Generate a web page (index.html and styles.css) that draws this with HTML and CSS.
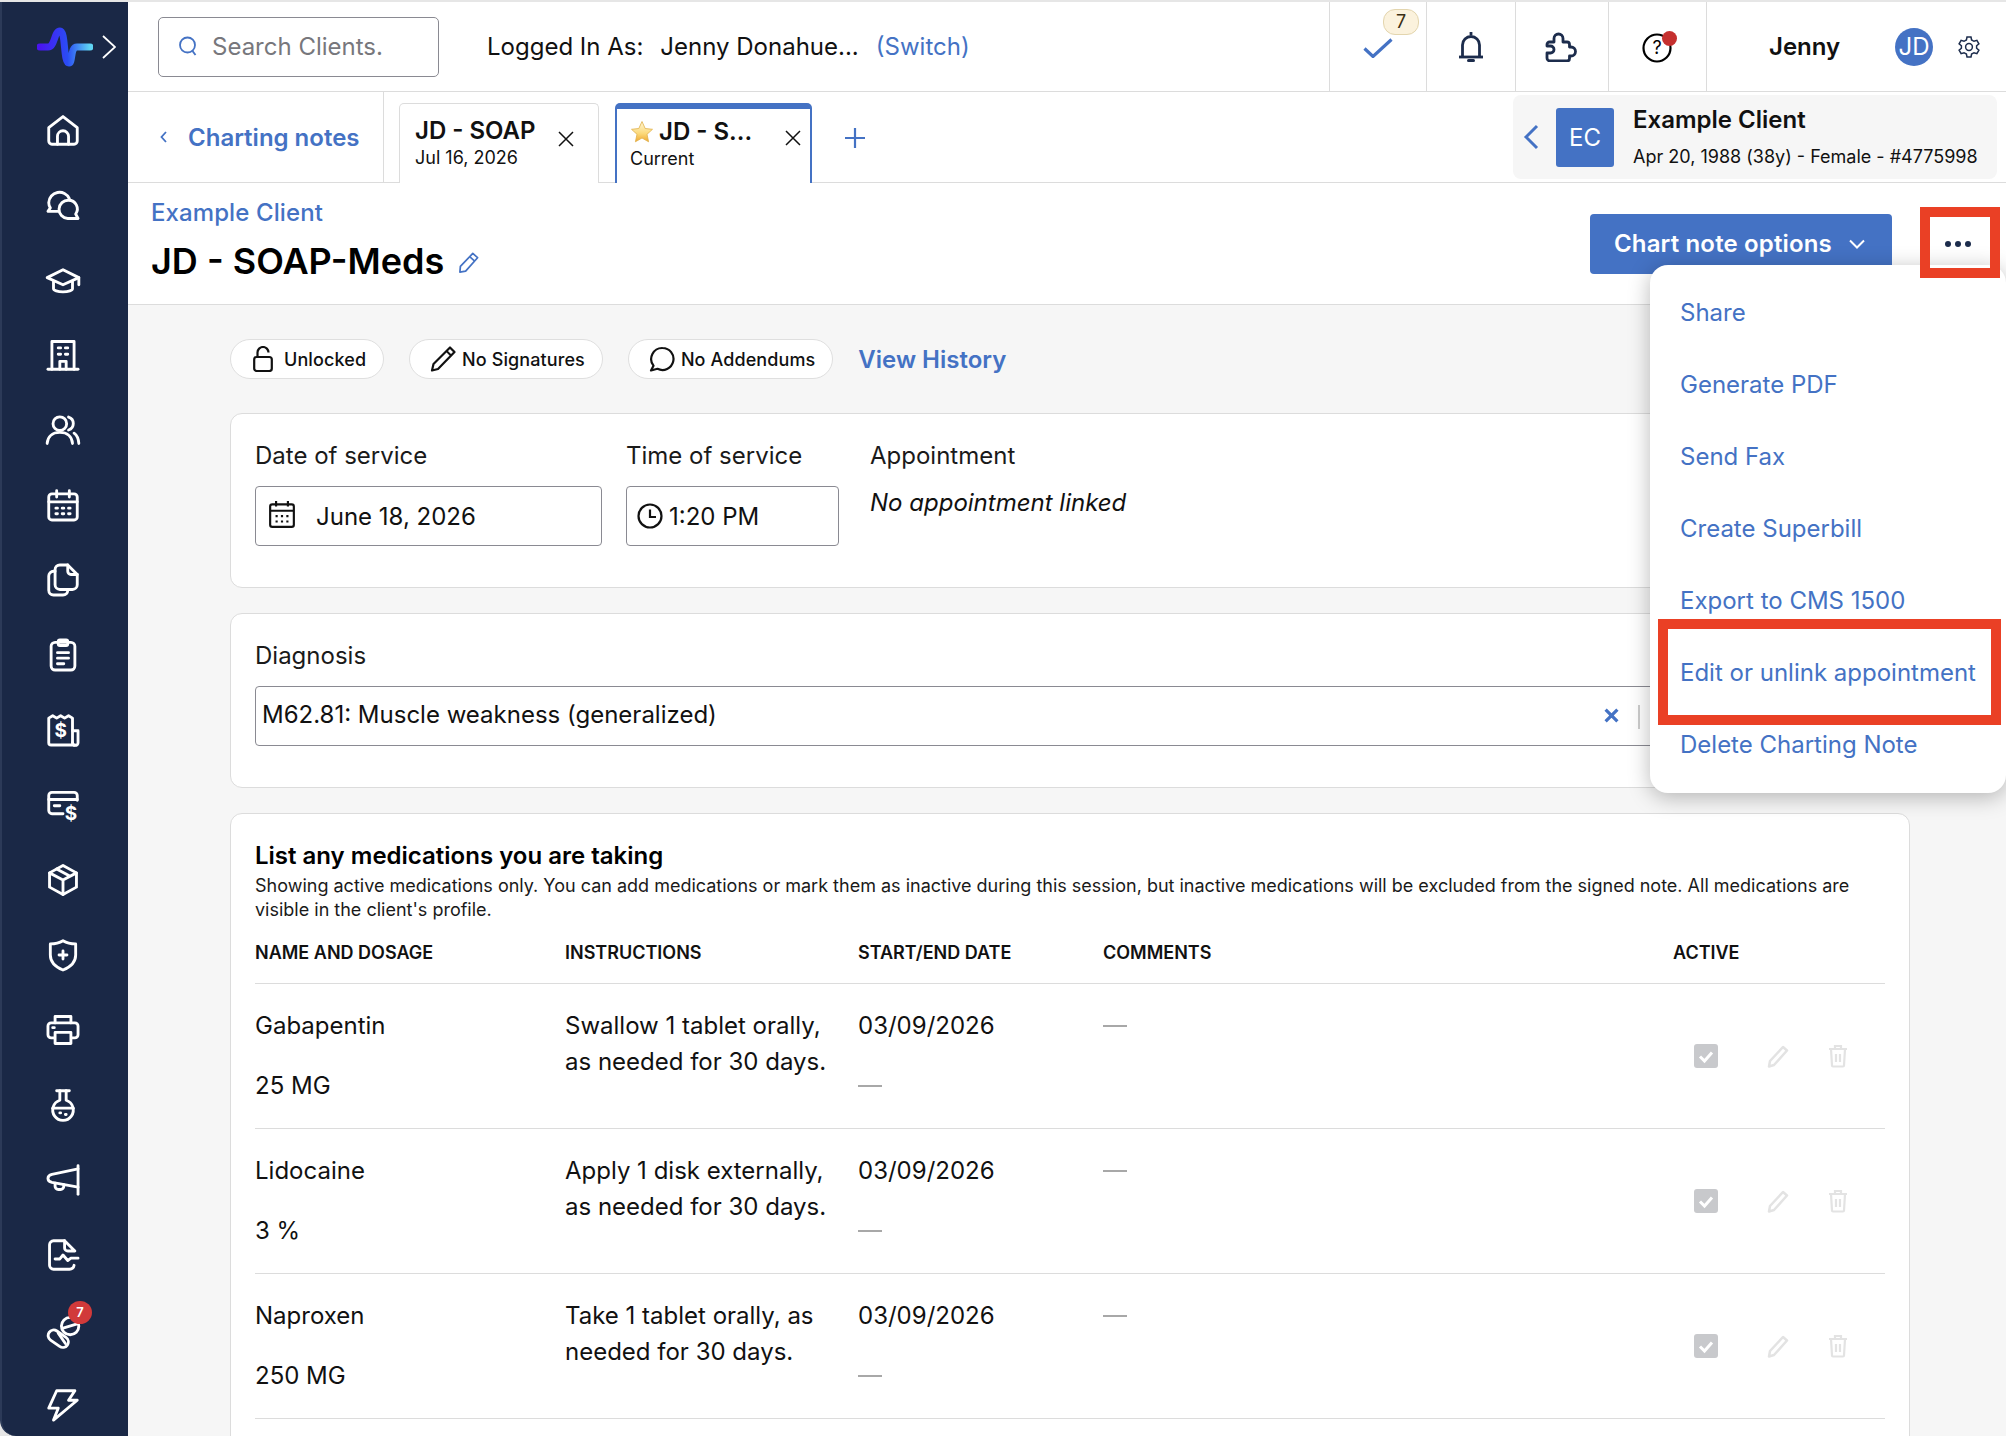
FILE: index.html
```html
<!DOCTYPE html>
<html lang="en">
<head>
    <meta charset="UTF-8">
    <meta name="viewport" content="width=device-width, initial-scale=1.0">
    <title>Charting note</title>
    <link rel="stylesheet" href="styles.css">
</head>
<body>
<div class="app">
    <nav class="sidebar">
        <div class="brand">
            <svg class="logo" viewBox="0 0 56 40" fill="none">
                <defs>
                    <linearGradient id="wave" x1="0" y1="0" x2="1" y2="0">
                        <stop offset="0" stop-color="#4a14f0"/>
                        <stop offset="0.55" stop-color="#2a4df5"/>
                        <stop offset="1" stop-color="#5fd4f2"/>
                    </linearGradient>
                </defs>
                <path d="M3 20h8c7 0 6-16 12-16s3 32 9 32c4 0 1-16 8-16h13" stroke="url(#wave)" stroke-width="7" stroke-linecap="round" stroke-linejoin="round"/>
            </svg>
            <svg class="brand-arrow" viewBox="0 0 14 24" fill="none"><path d="M1 1l12 11L1 23" stroke="#fff" stroke-width="1.800"/></svg>
        </div>
        <a class="nav-item"><svg viewBox="0 0 24 24"><path d="M3 10.500 12 3.500l9 7V19a2 2 0 0 1-2 2H5a2 2 0 0 1-2-2z"/><path d="M8.500 21v-5a3.500 3.500 0 0 1 7 0v5"/></svg></a>
        <a class="nav-item"><svg viewBox="0 0 24 24"><path d="M16 8A6.800 6.800 0 0 0 3 10.500c0 1.300.4 2.400 1 3.300L2.500 16H9"/><path d="M15.500 9a5.500 5.500 0 0 1 4.500 8.700l1.500 2.800h-6.500a5.700 5.700 0 0 1 .5-11.500z"/></svg></a>
        <a class="nav-item"><svg viewBox="0 0 24 24"><path d="M12 5.500 2 10.500l10 4.500 10-4.500z"/><path d="M6 13v4.500c0 1 2.500 2 6 2s6-1 6-2V13"/><path d="M22 10.500V15"/></svg></a>
        <a class="nav-item"><svg viewBox="0 0 24 24"><path d="M5 21V3.500h14V21"/><path d="M2.500 21h19"/><path d="M10 21v-5h4v5"/><path d="M9 7.500h1.500M13.500 7.500H15M9 11.500h1.500M13.500 11.500H15"/></svg></a>
        <a class="nav-item"><svg viewBox="0 0 24 24"><circle cx="10" cy="8" r="4.300"/><path d="M2 20.500c.3-4.500 3.500-7 8-7s7.700 2.500 8 7"/><path d="M15.500 3.800a4.300 4.300 0 0 1 0 8.200"/><path d="M19 14c1.800 1.300 2.800 3.500 3 6.500"/></svg></a>
        <a class="nav-item"><svg viewBox="0 0 24 24"><rect x="3" y="5" width="18" height="16.500" rx="2"/><path d="M3 10h18M8 3v4M16 3v4"/><path d="M7.500 14h1M11.500 14h1M15.500 14h1M7.500 17.500h1M11.500 17.500h1M15.500 17.500h1"/></svg></a>
        <a class="nav-item"><svg viewBox="0 0 24 24"><path d="M10 2.500h5l6 6V15a3 3 0 0 1-3 3h-8a3 3 0 0 1-3-3V5.500a3 3 0 0 1 3-3z"/><path d="M15 2.500v4a2 2 0 0 0 2 2h4"/><path d="M7 6.500H6a3 3 0 0 0-3 3v9a3 3 0 0 0 3 3h6a3 3 0 0 0 3-3"/></svg></a>
        <a class="nav-item"><svg viewBox="0 0 24 24"><rect x="4.500" y="4" width="15" height="17.500" rx="2.500"/><rect x="9" y="2.500" width="6" height="3.500" rx="1"/><path d="M8.500 10.500h7M8.500 14h7M8.500 17.500h4"/></svg></a>
        <a class="nav-item"><svg viewBox="0 0 24 24"><path d="M18 20V4.500L15.500 3 13 4.500 10.500 3 8 4.500 5.500 3 3 4.500V20a1.500 1.500 0 0 0 1.500 1.500h15"/><path d="M18 12.500h3.500V20a1.700 1.700 0 0 1-3.500 0"/><text x="10.500" y="16.500" class="nav-glyph">$</text></svg></a>
        <a class="nav-item"><svg viewBox="0 0 24 24"><path d="M12 17.500H5a2 2 0 0 1-2-2V6a2 2 0 0 1 2-2h14a2 2 0 0 1 2 2v3"/><path d="M3 8.500h18M6.500 12.500h3.500"/><text x="17" y="21.500" class="nav-glyph">$</text></svg></a>
        <a class="nav-item"><svg viewBox="0 0 24 24"><path d="M12 2.800 3.500 7.500v9L12 21.200l8.500-4.700v-9z"/><path d="M3.500 7.500 12 12l8.500-4.500M12 12v9.200M8 5l8.500 4.700"/></svg></a>
        <a class="nav-item"><svg viewBox="0 0 24 24"><path d="M12 3c2.500 1.500 5 2 8 2v7c0 4.500-3 7.500-8 9.500-5-2-8-5-8-9.500V5c3 0 5.500-.5 8-2z"/><path d="M12 9.500v5M9.500 12h5"/></svg></a>
        <a class="nav-item"><svg viewBox="0 0 24 24"><path d="M7 7.500V3.500h10v4"/><path d="M6.500 17H4.500a2 2 0 0 1-2-2v-5.500a2 2 0 0 1 2-2h15a2 2 0 0 1 2 2V15a2 2 0 0 1-2 2h-2"/><path d="M7 13.500h10v7H7z"/><path d="M5.500 10.500h1"/></svg></a>
        <a class="nav-item"><svg viewBox="0 0 24 24"><path d="M8 3h8"/><path d="M10 3v6a6.500 6.500 0 1 0 4 0V3"/><path d="M5.500 14h13"/><path d="M10 17h.5M13.500 18h.5"/></svg></a>
        <a class="nav-item"><svg viewBox="0 0 24 24"><path d="M21.500 3v18"/><path d="M21.500 5 5 8.500C3 9 2.500 10 2.500 11s.5 2 2.500 2.500l16.500 3"/><path d="M7 14v2a2 2 0 0 0 2 2h1.500a2 2 0 0 0 2-2v-1"/></svg></a>
        <a class="nav-item"><svg viewBox="0 0 24 24"><path d="M13 3H6a2.500 2.500 0 0 0-2.500 2.500v13A2.500 2.500 0 0 0 6 21h10a3 3 0 0 0 3-2.500"/><path d="M13 3l6.500 6.500H15a2 2 0 0 1-2-2z"/><path d="M7 14.500h3l2-2.500 3 3.500 2-1.500h4.500"/></svg></a>
        <a class="nav-item">
            <svg viewBox="0 0 24 24"><rect x="2" y="14" width="14" height="7" rx="3.500" transform="rotate(35 9 17.500)"/><path d="M9 14l4.500 6.500"/><circle cx="16.500" cy="9.500" r="5.500"/><path d="M11.500 11l10-3"/></svg>
            <span class="nav-badge">7</span>
        </a>
        <a class="nav-item"><svg viewBox="0 0 24 24"><path d="M8 3h11.500l-4 6H21L6 21.500 9 14H3z"/></svg></a>
    </nav>

    <div class="main">
        <header class="topbar">
            <div class="search">
                <svg class="search-icon" viewBox="0 0 24 24" fill="none"><circle cx="11.500" cy="11" r="7.500" stroke="#4472c4" stroke-width="1.800"/><path d="M16.500 17l3 4" stroke="#4472c4" stroke-width="1.800"/></svg>
                <span>Search Clients.</span>
            </div>
            <div class="logged">
                <span>Logged In As:</span>
                <span class="logged-name">Jenny Donahue...</span>
                <a class="switch">(Switch)</a>
            </div>
            <div class="top-cell cell-tasks">
                <svg class="ico-check" viewBox="0 0 30 20" fill="none"><path d="M1.500 10.500 10 18.500 28.500 1.500" stroke="#4472c4" stroke-width="3.200"/></svg>
                <span class="task-badge">7</span>
            </div>
            <div class="top-cell cell-bell">
                <svg class="ico-bell" viewBox="0 0 26 32" fill="none"><path d="M13 1v3" stroke="#1c2c4c" stroke-width="2.800"/><path d="M4.500 25V14a8.500 8.500 0 0 1 17 0v11" stroke="#1c2c4c" stroke-width="2.800"/><path d="M1 26h24" stroke="#1c2c4c" stroke-width="2.800"/><path d="M10.500 29.500h5" stroke="#1c2c4c" stroke-width="3" stroke-linecap="round"/></svg>
            </div>
            <div class="top-cell cell-puzzle">
                <svg class="ico-puzzle" viewBox="0 0 32 30" fill="none"><path d="M5 29a3 3 0 0 1-3-3v-5h3.500a3.500 3.500 0 0 0 0-7H2v-1.500A2.500 2.500 0 0 1 4.500 10H9V6.500a4.500 4.500 0 0 1 9 0V10h4a2.500 2.500 0 0 1 2.500 2.500V15H26a4.500 4.500 0 0 1 0 9h-1.500v2.500A2.500 2.500 0 0 1 22 29z" stroke="#1c2c4c" stroke-width="2.800" stroke-linejoin="round"/></svg>
            </div>
            <div class="top-cell cell-help">
                <svg class="ico-help" viewBox="0 0 30 30" fill="none"><circle cx="15" cy="15" r="13.500" stroke="#000" stroke-width="2.200"/><text x="15" y="21" class="help-glyph">?</text></svg>
                <span class="help-dot"></span>
            </div>
            <div class="user">
                <span class="user-name">Jenny</span>
                <span class="avatar">JD</span>
                <svg class="ico-gear" viewBox="0 0 24 24" fill="none" stroke="#1c2c4c" stroke-width="1.500"><circle cx="12" cy="12" r="3.400"/><path d="M10 2h4l.6 3 2.400 1.300 2.900-1 2 3.500-2.300 2v2.400l2.300 2-2 3.500-2.900-1-2.400 1.300-.6 3h-4l-.6-3L7 17.700l-2.900 1-2-3.500 2.300-2v-2.400l-2.300-2 2-3.500 2.900 1L9.400 5z"/></svg>
            </div>
        </header>

        <div class="tabbar">
            <a class="back-link">
                <svg class="back-arrow" viewBox="0 0 8 12" fill="none"><path d="M6.500 1 2 6l4.500 5" stroke="#4472c4" stroke-width="1.800"/></svg>
                Charting notes
            </a>
            <div class="tab">
                <div class="tab-text">
                    <div class="tab-title">JD - SOAP</div>
                    <div class="tab-sub">Jul 16, 2026</div>
                </div>
                <svg class="tab-close" viewBox="0 0 16 16" fill="none"><path d="M1 1l14 14M15 1 1 15" stroke="#111" stroke-width="1.500"/></svg>
            </div>
            <div class="tab tab-active">
                <div class="tab-text">
                    <div class="tab-title">
                        <svg class="tab-star" viewBox="0 0 24 24"><defs><linearGradient id="gold" x1="0" y1="0" x2="0" y2="1"><stop offset="0" stop-color="#fff8d8"/><stop offset="0.6" stop-color="#fbd878"/><stop offset="1" stop-color="#f0a830"/></linearGradient></defs><path d="M12 1.500l3.200 7 7.300.8-5.500 5 1.600 7.500L12 18l-6.600 3.800L7 14.300l-5.500-5 7.300-.8z" fill="url(#gold)" stroke="#e0b04a" stroke-width=".8"/></svg>
                        JD - S...
                    </div>
                    <div class="tab-sub">Current</div>
                </div>
                <svg class="tab-close" viewBox="0 0 16 16" fill="none"><path d="M1 1l14 14M15 1 1 15" stroke="#111" stroke-width="1.500"/></svg>
            </div>
            <svg class="tab-add" viewBox="0 0 22 22" fill="none"><path d="M11 1v20M1 11h20" stroke="#4472c4" stroke-width="2.200"/></svg>
            <div class="client-card">
                <svg class="client-arrow" viewBox="0 0 16 26" fill="none"><path d="M14 2 3 13l11 11" stroke="#4472c4" stroke-width="3"/></svg>
                <span class="client-ec">EC</span>
                <div class="client-info">
                    <div class="client-name">Example Client</div>
                    <div class="client-sub">Apr 20, 1988 (38y) - Female - #4775998</div>
                </div>
            </div>
        </div>

        <div class="note-head">
            <div>
                <a class="note-client">Example Client</a>
                <h1 class="note-title">
                    JD - SOAP-Meds
                    <svg class="note-edit" viewBox="0 0 22 22" fill="none"><path d="M15.500 1.500l5 4.500L8 20l-6 1 .5-6z" stroke="#4472c4" stroke-width="1.800" stroke-linejoin="round"/><path d="M12.500 5l5 4.500" stroke="#4472c4" stroke-width="1.800"/></svg>
                </h1>
            </div>
            <div class="note-actions">
                <button class="options-btn">Chart note options
                    <svg class="options-caret" viewBox="0 0 16 10" fill="none"><path d="M1 1.500l7 7 7-7" stroke="#fff" stroke-width="2"/></svg>
                </button>
                <button class="dots-btn"><span></span><span></span><span></span></button>
            </div>
        </div>

        <div class="content">
            <div class="pills">
                <span class="pill">
                    <svg class="pill-ico" viewBox="0 0 20 26" fill="none"><rect x="1.200" y="11" width="17.600" height="14" rx="2.500" stroke="#111" stroke-width="2.200"/><path d="M4.500 11V6.500a5.500 5.500 0 0 1 11 0" stroke="#111" stroke-width="2.200"/></svg>
                    Unlocked
                </span>
                <span class="pill">
                    <svg class="pill-ico ico-wide" viewBox="0 0 26 26" fill="none"><path d="M20 1.500l4.500 4.500L8 23l-6 1.500L3.500 18z" stroke="#111" stroke-width="2.200" stroke-linejoin="round"/><path d="M16.500 5l4.500 4.500" stroke="#111" stroke-width="2"/></svg>
                    No Signatures
                </span>
                <span class="pill">
                    <svg class="pill-ico ico-wide" viewBox="0 0 26 26" fill="none"><path d="M13.500 2a11 11 0 1 1-5 20.800L2 24.500l2.500-4.800A11 11 0 0 1 13.500 2z" stroke="#111" stroke-width="2.200" stroke-linejoin="round"/></svg>
                    No Addendums
                </span>
                <a class="history">View History</a>
            </div>

            <section class="card card-service">
                <div class="field field-date">
                    <label class="label">Date of service</label>
                    <div class="input">
                        <svg class="input-ico ico-cal" viewBox="0 0 24 26" fill="none" stroke="#111" stroke-width="2"><rect x="1" y="4" width="22" height="21" rx="2"/><path d="M1 10h22M6.500 1v5M17.500 1v5"/><path d="M6 15h2M11 15h2M16 15h2M6 20h2M11 20h2M16 20h2"/></svg>
                        <span class="date-value">June 18, 2026</span>
                    </div>
                </div>
                <div class="field field-time">
                    <label class="label">Time of service</label>
                    <div class="input">
                        <svg class="input-ico" viewBox="0 0 26 26" fill="none" stroke="#111" stroke-width="2.200"><circle cx="13" cy="13" r="11.500"/><path d="M13 6.500V14h6"/></svg>
                        <span>1:20 PM</span>
                    </div>
                </div>
                <div class="field">
                    <label class="label">Appointment</label>
                    <p class="appt">No appointment linked</p>
                </div>
            </section>

            <section class="card card-diagnosis">
                <label class="label">Diagnosis</label>
                <div class="input input-diagnosis">
                    <span class="diagnosis-value">M62.81: Muscle weakness (generalized)</span>
                    <svg class="clear-ico" viewBox="0 0 14 14" fill="none"><path d="M1.500 1.500l11 11M12.500 1.500l-11 11" stroke="#4472c4" stroke-width="3"/></svg>
                    <span class="input-sep"></span>
                </div>
            </section>

            <section class="card card-meds">
                <h2 class="meds-title">List any medications you are taking</h2>
                <p class="meds-desc">Showing active medications only. You can add medications or mark them as inactive during this session, but inactive medications will be excluded from the signed note. All medications are visible in the client's profile.</p>
                <div class="med-grid med-head">
                    <div>NAME AND DOSAGE</div>
                    <div>INSTRUCTIONS</div>
                    <div>START/END DATE</div>
                    <div>COMMENTS</div>
                    <div>ACTIVE</div>
                </div>

                <div class="med-grid med-row">
                    <div class="med-stack"><span>Gabapentin</span><span>25 MG</span></div>
                    <div class="med-text">Swallow 1 tablet orally, as needed for 30 days.</div>
                    <div class="med-stack"><span>03/09/2026</span><span class="dash"></span></div>
                    <div class="med-stack"><span class="dash"></span></div>
                    <div class="med-actions">
                        <span class="med-check"><svg viewBox="0 0 24 24" fill="none"><path d="M6 12.500l4.500 4.500L18 8.500" stroke="#fff" stroke-width="3"/></svg></span>
                        <svg class="med-edit" viewBox="0 0 22 24" fill="none"><path d="M16 3l4 3.500L7 21l-5 1.500L3 17z" stroke="#e3e3e3" stroke-width="2.500" stroke-linejoin="round"/></svg>
                        <svg class="med-trash" viewBox="0 0 20 24" fill="none" stroke="#e3e3e3" stroke-width="2.200"><path d="M1 5h18M7 5V2h6v3M3 5l1 16.500a1 1 0 0 0 1 1h10a1 1 0 0 0 1-1L17 5M8 10v8M12 10v8"/></svg>
                    </div>
                </div>

                <div class="med-grid med-row">
                    <div class="med-stack"><span>Lidocaine</span><span>3 %</span></div>
                    <div class="med-text">Apply 1 disk externally, as needed for 30 days.</div>
                    <div class="med-stack"><span>03/09/2026</span><span class="dash"></span></div>
                    <div class="med-stack"><span class="dash"></span></div>
                    <div class="med-actions">
                        <span class="med-check"><svg viewBox="0 0 24 24" fill="none"><path d="M6 12.500l4.500 4.500L18 8.500" stroke="#fff" stroke-width="3"/></svg></span>
                        <svg class="med-edit" viewBox="0 0 22 24" fill="none"><path d="M16 3l4 3.500L7 21l-5 1.500L3 17z" stroke="#e3e3e3" stroke-width="2.500" stroke-linejoin="round"/></svg>
                        <svg class="med-trash" viewBox="0 0 20 24" fill="none" stroke="#e3e3e3" stroke-width="2.200"><path d="M1 5h18M7 5V2h6v3M3 5l1 16.500a1 1 0 0 0 1 1h10a1 1 0 0 0 1-1L17 5M8 10v8M12 10v8"/></svg>
                    </div>
                </div>

                <div class="med-grid med-row">
                    <div class="med-stack"><span>Naproxen</span><span>250 MG</span></div>
                    <div class="med-text">Take 1 tablet orally, as needed for 30 days.</div>
                    <div class="med-stack"><span>03/09/2026</span><span class="dash"></span></div>
                    <div class="med-stack"><span class="dash"></span></div>
                    <div class="med-actions">
                        <span class="med-check"><svg viewBox="0 0 24 24" fill="none"><path d="M6 12.500l4.500 4.500L18 8.500" stroke="#fff" stroke-width="3"/></svg></span>
                        <svg class="med-edit" viewBox="0 0 22 24" fill="none"><path d="M16 3l4 3.500L7 21l-5 1.500L3 17z" stroke="#e3e3e3" stroke-width="2.500" stroke-linejoin="round"/></svg>
                        <svg class="med-trash" viewBox="0 0 20 24" fill="none" stroke="#e3e3e3" stroke-width="2.200"><path d="M1 5h18M7 5V2h6v3M3 5l1 16.500a1 1 0 0 0 1 1h10a1 1 0 0 0 1-1L17 5M8 10v8M12 10v8"/></svg>
                    </div>
                </div>
            </section>
        </div>
    </div>

    <ul class="menu">
        <li>Share</li>
        <li>Generate PDF</li>
        <li>Send Fax</li>
        <li>Create Superbill</li>
        <li>Export to CMS 1500</li>
        <li>Edit or unlink appointment</li>
        <li>Delete Charting Note</li>
    </ul>
    <div class="mark mark-dots"></div>
    <div class="mark mark-edit"></div>
</div>
</body>
</html>
```
FILE: styles.css
```css
*{
    margin: 0;
    padding: 0;
    box-sizing: border-box;
}
html, body{
    height: 100%;
    overflow: hidden;
}
body{
    font-family: Inter, "Noto Sans", sans-serif;
    font-size: 24px;
    color: #111;
    background-color: #e6e6e6;
}
.app{
    position: relative;
    display: flex;
    height: 1436px;
    padding-top: 2px;
    overflow: hidden;
}
a{
    color: #4472c4;
}

/* sidebar */
.sidebar{
    width: 128px;
    flex-shrink: 0;
    background-color: #1a2846;
    border-left: 2px solid #2c3a58;
    border-bottom-left-radius: 16px;
    display: flex;
    flex-direction: column;
    align-items: center;
}
.brand{
    width: 100%;
    height: 90px;
    flex-shrink: 0;
    display: flex;
    align-items: center;
    padding-left: 35px;
}
.logo{
    width: 56px;
    height: 40px;
}
.brand-arrow{
    width: 14px;
    height: 24px;
    margin-left: 9px;
}
.nav-item{
    position: relative;
    height: 75px;
    width: 100%;
    padding-right: 4px;
    display: flex;
    align-items: center;
    justify-content: center;
    flex-shrink: 0;
}
.nav-item svg{
    width: 38px;
    height: 38px;
    fill: none;
    stroke: #fff;
    stroke-width: 1.800;
    stroke-linejoin: round;
    stroke-linecap: round;
}
.nav-glyph{
    font-family: Inter, sans-serif;
    font-size: 12px;
    font-weight: 700;
    fill: #fff;
    stroke: none;
    text-anchor: middle;
}
.nav-badge{
    position: absolute;
    left: 66px;
    top: 9px;
    width: 24px;
    height: 23px;
    border-radius: 50%;
    background-color: #d13a3a;
    color: #fff;
    font-size: 13px;
    font-weight: 600;
    line-height: 23px;
    text-align: center;
}

/* top bar */
.main{
    flex: 1;
    min-width: 0;
    display: flex;
    flex-direction: column;
    background-color: #f6f6f6;
}
.topbar{
    height: 90px;
    background-color: #fff;
    border-bottom: 1px solid #dcdcdc;
    display: flex;
    align-items: stretch;
    flex-shrink: 0;
}
.search{
    width: 281px;
    height: 60px;
    margin: 15px 0 0 30px;
    border: 1px solid #8a8a92;
    border-radius: 5px;
    display: flex;
    align-items: center;
    padding: 0 0 2px 17px;
    color: #77777c;
}
.search-icon{
    width: 24px;
    height: 24px;
    margin-right: 12px;
}
.logged{
    margin-left: 48px;
    flex: 1;
    display: flex;
    align-items: center;
}
.logged-name{
    margin-left: 17px;
}
.switch{
    margin-left: 17px;
}
.top-cell{
    position: relative;
    border-left: 1px solid #dcdcdc;
    display: flex;
    align-items: center;
    justify-content: center;
}
.cell-tasks{
    width: 97px;
}
.cell-bell{
    width: 89px;
}
.cell-puzzle{
    width: 93px;
}
.cell-help{
    width: 98px;
}
.ico-check{
    width: 30px;
    height: 20px;
    margin-top: 2px;
}
.task-badge{
    position: absolute;
    left: 53px;
    top: 7px;
    width: 36px;
    height: 26px;
    border: 1px solid #e3d5ae;
    border-radius: 12px;
    background-color: #fbf2dd;
    color: #3a2f15;
    font-size: 18px;
    line-height: 24px;
    text-align: center;
}
.ico-bell{
    width: 26px;
    height: 32px;
}
.ico-puzzle{
    width: 32px;
    height: 30px;
    margin: 0 2px 0 0;
}
.ico-help{
    width: 30px;
    height: 30px;
    margin: 2px 0 0 -1px;
}
.help-glyph{
    font-family: Inter, sans-serif;
    font-size: 18px;
    fill: #000;
    text-anchor: middle;
}
.help-dot{
    position: absolute;
    left: 53px;
    top: 29px;
    width: 15px;
    height: 15px;
    border-radius: 50%;
    background-color: #c5302f;
}
.user{
    flex: 0 0 300px;
    border-left: 1px solid #dcdcdc;
    display: flex;
    align-items: center;
    padding-left: 62px;
}
.user-name{
    font-weight: 600;
    width: 126px;
}
.avatar{
    width: 38px;
    height: 38px;
    border-radius: 50%;
    background-color: #4472c4;
    color: #fff;
    display: flex;
    align-items: center;
    justify-content: center;
    font-size: 24px;
}
.ico-gear{
    width: 24px;
    height: 24px;
    margin-left: 24px;
}

/* tabs */
.tabbar{
    height: 91px;
    background-color: #fff;
    border-bottom: 1px solid #dcdcdc;
    display: flex;
    align-items: flex-end;
    position: relative;
    flex-shrink: 0;
}
.back-link{
    width: 256px;
    height: 90px;
    border-right: 1px solid #dcdcdc;
    display: flex;
    align-items: center;
    padding-left: 31px;
    font-weight: 600;
}
.back-arrow{
    width: 9px;
    height: 12px;
    margin-right: 20px;
}
.tab{
    width: 200px;
    height: 80px;
    margin-left: 15px;
    margin-bottom: -1px;
    padding: 11px 15px 0;
    background-color: #fff;
    border: 1px solid #dcdcdc;
    border-bottom: 0;
    border-radius: 5px 5px 0 0;
    display: flex;
    justify-content: space-between;
}
.tab-active{
    width: 197px;
    margin-left: 16px;
    padding: 7px 9px 0 13px;
    border: 2px solid #4472c4;
    border-top-width: 6px;
    border-bottom: 0;
}
.tab-title{
    font-weight: 600;
    font-size: 24px;
    line-height: 32px;
    display: flex;
    align-items: center;
    white-space: nowrap;
}
.tab-star{
    width: 24px;
    height: 24px;
    margin-right: 5px;
}
.tab-sub{
    font-size: 18px;
    line-height: 24px;
    margin-top: -1px;
}
.tab-close{
    width: 16px;
    height: 16px;
    margin-top: 16px;
    margin-right: 9px;
}
.tab-active .tab-close{
    margin-top: 14px;
    margin-right: 0;
}
.tab-add{
    width: 22px;
    height: 22px;
    margin: 0 0 33px 32px;
}
.client-card{
    position: absolute;
    left: 1385px;
    top: 3px;
    width: 484px;
    height: 84px;
    background-color: #f6f6f6;
    border-radius: 8px;
    display: flex;
    align-items: center;
    padding-left: 10px;
}
.client-arrow{
    width: 16px;
    height: 26px;
}
.client-ec{
    width: 58px;
    height: 59px;
    margin-left: 17px;
    border-radius: 3px;
    background-color: #4472c4;
    color: #fff;
    display: flex;
    align-items: center;
    justify-content: center;
}
.client-info{
    margin-left: 19px;
}
.client-name{
    font-weight: 600;
    line-height: 30px;
}
.client-sub{
    font-size: 18px;
    line-height: 24px;
    margin-top: 10px;
    white-space: nowrap;
}

/* note header */
.note-head{
    height: 122px;
    background-color: #fff;
    border-bottom: 1px solid #dcdcdc;
    padding: 15px 114px 0 23px;
    display: flex;
    justify-content: space-between;
    flex-shrink: 0;
}
.note-client{
    display: block;
    font-weight: 500;
    line-height: 30px;
    letter-spacing: 0.1px;
}
.note-title{
    margin-top: 11px;
    font-size: 36px;
    font-weight: 600;
    line-height: 44px;
    color: #000;
    display: flex;
    align-items: center;
}
.note-edit{
    width: 21px;
    height: 21px;
    margin-left: 14px;
    margin-top: 3px;
}
.note-actions{
    display: flex;
}
.options-btn{
    width: 302px;
    height: 60px;
    margin-top: 16px;
    padding: 0 0 2px 24px;
    border: 0;
    border-radius: 4px;
    background-color: #4472c4;
    color: #fff;
    font-family: inherit;
    font-size: 24px;
    font-weight: 600;
    letter-spacing: 0.15px;
    display: flex;
    align-items: center;
}
.options-caret{
    width: 16px;
    height: 10px;
    margin: 2px 0 0 17px;
}
.dots-btn{
    position: absolute;
    left: 1928px;
    top: 218px;
    width: 60px;
    height: 51px;
    background: none;
    border: 0;
    display: flex;
    align-items: center;
    justify-content: center;
    gap: 4px;
}
.dots-btn span{
    width: 6px;
    height: 6px;
    border-radius: 50%;
    background-color: #1c2c4c;
}

/* content */
.content{
    flex: 1;
    padding: 34px 0 0 102px;
    width: 1782px;
}
.pills{
    display: flex;
    align-items: center;
    height: 40px;
}
.pill{
    height: 40px;
    border: 1px solid #dfdfdf;
    border-radius: 20px;
    background-color: #fff;
    display: flex;
    align-items: center;
    padding: 0 17px 0 22px;
    margin-right: 25px;
    font-size: 18px;
    font-weight: 500;
    letter-spacing: 0.1px;
}
.pill-ico{
    width: 20px;
    height: 26px;
    margin-right: 11px;
}
.ico-wide{
    width: 26px;
    margin-right: 6px;
    margin-left: -2px;
}
.history{
    font-weight: 600;
}
.card{
    background-color: #fff;
    border: 1px solid #dcdcdc;
    border-radius: 12px;
    padding: 27px 24px 0;
}
.card-service{
    height: 175px;
    margin-top: 34px;
    display: flex;
}
.card-diagnosis{
    height: 175px;
    margin-top: 25px;
}
.card-meds{
    margin-top: 25px;
    padding-bottom: 40px;
}
.label{
    display: block;
    line-height: 30px;
    color: #1a1a1a;
}
.input{
    height: 60px;
    margin-top: 15px;
    border: 1px solid #8a8a92;
    border-radius: 4px;
    display: flex;
    align-items: center;
}
.input-ico{
    width: 26px;
    height: 26px;
}
.ico-cal{
    height: 28px;
    margin-bottom: 5px;
}
.field-date{
    width: 347px;
    margin-right: 24px;
}
.field-date .input{
    padding-left: 13px;
}
.date-value{
    margin-left: 21px;
}
.field-time{
    width: 213px;
    margin-right: 31px;
}
.field-time .input{
    padding-left: 10px;
}
.field-time .input span{
    margin-left: 6px;
}
.appt{
    margin-top: 17px;
    font-style: italic;
    line-height: 30px;
}
.input-diagnosis{
    padding: 0 0 3px 6px;
}
.clear-ico{
    width: 15px;
    height: 15px;
    margin-left: auto;
    margin-right: 19px;
    position: relative;
    left: -244px;
    top: 1px;
}
.input-sep{
    width: 2px;
    height: 24px;
    background-color: #ccc;
    position: relative;
    left: -244px;
    top: 2px;
}

/* medications */
.meds-title{
    font-size: 24px;
    font-weight: 600;
    line-height: 30px;
    color: #000;
}
.meds-desc{
    margin-top: 3px;
    font-size: 18px;
    line-height: 24px;
    color: #1a1a1a;
}
.med-grid{
    display: grid;
    grid-template-columns: 310px 293px 245px 570px 1fr;
}
.med-head{
    padding: 19px 0 18px;
    font-size: 18px;
    font-weight: 600;
    line-height: 24px;
    border-bottom: 1px solid #dcdcdc;
}
.med-row{
    height: 145px;
    padding-top: 24px;
    border-bottom: 1px solid #dcdcdc;
    line-height: 36px;
}
.med-stack{
    display: flex;
    flex-direction: column;
    gap: 24px;
    align-items: flex-start;
}
.med-text{
    padding-right: 30px;
}
.dash{
    display: block;
    width: 24px;
    height: 2px;
    background-color: #a8a8a8;
    margin-top: 17px;
    margin-bottom: 17px;
}
.med-actions{
    display: flex;
    align-items: center;
    padding: 0 0 25px 21px;
}
.med-check{
    width: 24px;
    height: 24px;
    border-radius: 3px;
    background-color: #c8c9cc;
    display: block;
}
.med-check svg{
    display: block;
}
.med-edit{
    width: 22px;
    height: 24px;
    margin-left: 49px;
}
.med-trash{
    width: 20px;
    height: 24px;
    margin-left: 39px;
}

/* dropdown and the red marks lie over the page */
.menu{
    position: absolute;
    left: 1650px;
    top: 265px;
    width: 356px;
    height: 528px;
    padding-top: 12px;
    list-style: none;
    background-color: #fff;
    border-radius: 18px;
    box-shadow: 0 4px 22px rgba(0,0,0,0.28);
}
.menu li{
    height: 72px;
    padding-left: 30px;
    line-height: 72px;
    color: #4472c4;
    white-space: nowrap;
}
.mark{
    position: absolute;
    border: 10px solid #ea4025;
}
.mark-dots{
    left: 1920px;
    top: 207px;
    width: 80px;
    height: 71px;
}
.mark-edit{
    left: 1658px;
    top: 619px;
    width: 343px;
    height: 106px;
}
```
